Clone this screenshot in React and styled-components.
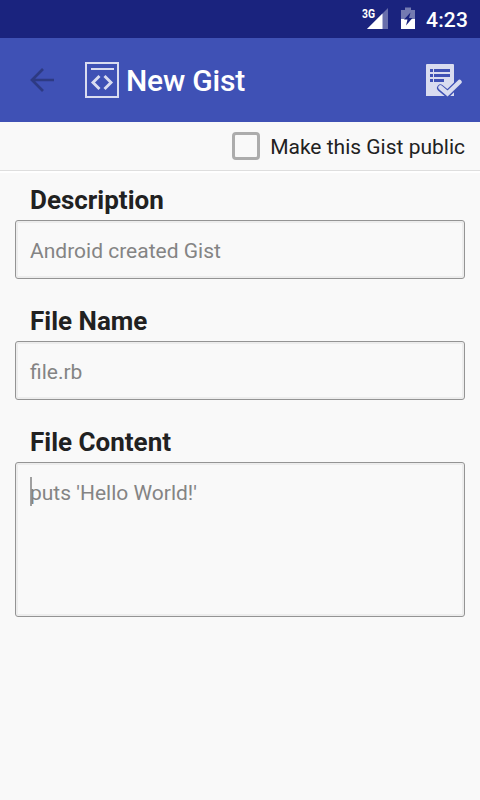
import React from "react";
import styled, { createGlobalStyle } from "styled-components";

const GlobalStyle = createGlobalStyle`
  * { box-sizing: border-box; }
  body { margin: 0; background: #f9f9f9; font-family: Roboto, sans-serif; }
`;

const Screen = styled.div`
  display: flex;
  flex-direction: column;
  width: 480px;
  height: 800px;
  overflow: hidden;
  background: #f9f9f9;
  color: #212121;
`;

const StatusBar = styled.header`
  display: flex;
  align-items: center;
  justify-content: flex-end;
  height: 38px;
  padding-right: 12px;
  background: #1a237e;
  color: #fff;
`;

const StatusIcons = styled.svg`
  display: block;
  width: 56px;
  height: 38px;
  margin-right: 10px;
`;

const Network = styled.text`
  font: 700 12.5px Roboto, sans-serif;
  fill: #fff;
`;

const Clock = styled.time`
  width: 42px;
  font-size: 21px;
  font-weight: 500;
  letter-spacing: 0.2px;
  line-height: 38px;
  padding-top: 1px;
`;

const AppBar = styled.nav`
  display: flex;
  align-items: center;
  height: 84px;
  padding: 0 18px 0 29px;
  background: #3f51b5;
`;

const Icon = styled.svg`
  display: block;
  flex: none;
  width: ${(p) => p.$w}px;
  height: ${(p) => p.$h}px;
  margin-right: ${(p) => p.$gap || 0}px;
`;

const Title = styled.h1`
  flex: 1;
  margin: 0;
  color: #fff;
  font-size: 30px;
  font-weight: 500;
  letter-spacing: -0.2px;
  line-height: 36px;
  padding-top: 2px;
`;

const PublicRow = styled.label`
  display: flex;
  align-items: center;
  justify-content: flex-end;
  height: 49px;
  padding-right: 15px;
  border-bottom: 1px solid #dedede;
  box-shadow: 0 2px 0 #fff;
  font-size: 21px;
  line-height: 25px;
`;

const CheckBox = styled.span`
  width: 28px;
  height: 28px;
  margin-right: 10px;
  border: 3px solid #acacac;
  border-radius: 4px;
`;

const CheckLabel = styled.span`
  padding-top: 2px;
`;

const Form = styled.main`
  display: flex;
  flex-direction: column;
  padding: 13px 15px 0;
`;

const Field = styled.section`
  display: flex;
  flex-direction: column;
  margin-bottom: 26px;
`;

const FieldLabel = styled.h2`
  height: 36px;
  margin: 0;
  padding-left: 15px;
  font-size: 26px;
  font-weight: 700;
  line-height: 32px;
`;

const Input = styled.div`
  display: flex;
  align-items: flex-start;
  height: ${(p) => p.$height}px;
  padding: 18px 14px;
  border: 1px solid #949494;
  border-radius: 3px;
  box-shadow: inset 0 0 0 2px #ededed;
  color: #848484;
  font-size: 21px;
  line-height: 25px;
`;

const Cursor = styled.span`
  width: 2px;
  height: 29px;
  margin: -4px -2px 0 0;
  background: #a0a0a0;
`;

const fields = [
  { label: "Description", hint: "Android created Gist", height: 59 },
  { label: "File Name", hint: "file.rb", height: 59 },
  { label: "File Content", hint: "puts 'Hello World!'", height: 155, focused: true },
];

export default function App() {
  return (
    <>
      <GlobalStyle />
      <Screen>
        <StatusBar>
          <StatusIcons viewBox="0 0 56 38">
            <path d="M28 8v21H7z" fill="#fff" fillOpacity=".35" />
            <path d="M22.500 13.500V29H7z" fill="#fff" />
            <Network x="2" y="17.500" textLength="13" lengthAdjust="spacingAndGlyphs">3G</Network>
            <path d="M41 10h4V7.500h6V10h4v9H41z" fill="#fff" fillOpacity=".4" />
            <path d="M41 19h14v10H41z" fill="#fff" />
            <path d="M50.500 12.500l-6.500 7h3.500l-1.500 6 6.500-7.500H49z" fill="#1a237e" />
          </StatusIcons>
          <Clock>4:23</Clock>
        </StatusBar>
        <AppBar>
          <Icon $w={26} $h={26} $gap={30} viewBox="0 0 26 26" fill="none" stroke="#2d3a83" strokeWidth="2.700">
            <path d="M14 2L3 13l11 11M3 13h22" />
          </Icon>
          <Icon $w={34} $h={36} $gap={7} viewBox="0 0 34 36" fill="none" stroke="#d9dcf0">
            <path d="M1 1h32v34H1z" strokeWidth="2" />
            <path d="M6 7h23" strokeWidth="2" />
            <path d="M14.500 14L8 20.500l6.500 6.500M19.500 14l6.500 6.500-6.500 6.500" strokeWidth="2.900" />
          </Icon>
          <Title>New Gist</Title>
          <Icon $w={36} $h={34} viewBox="0 -1 36 34">
            <path d="M1 0h26a1 1 0 0 1 1 1v31H0V1a1 1 0 0 1 1-1z" fill="#d9dcf0" />
            <path d="M4 6.500h3m1 0h16M4 11.500h3m1 0h16M4 16.500h3m1 0h10" stroke="#3f51b5" strokeWidth="2.800" />
            <path d="M14.500 24l7 5.800L34 17.500" fill="none" stroke="#3f51b5" strokeWidth="7" strokeLinejoin="round" strokeLinecap="round" />
            <path d="M14.500 23.500l7 6L33.500 18" fill="none" stroke="#d9dcf0" strokeWidth="4.500" strokeLinecap="round" />
          </Icon>
        </AppBar>
        <PublicRow>
          <CheckBox />
          <CheckLabel>Make this Gist public</CheckLabel>
        </PublicRow>
        <Form>
          {fields.map((f) => (
            <Field key={f.label}>
              <FieldLabel>{f.label}</FieldLabel>
              <Input $height={f.height}>
                {f.focused && <Cursor />}
                {f.hint}
              </Input>
            </Field>
          ))}
        </Form>
      </Screen>
    </>
  );
}
